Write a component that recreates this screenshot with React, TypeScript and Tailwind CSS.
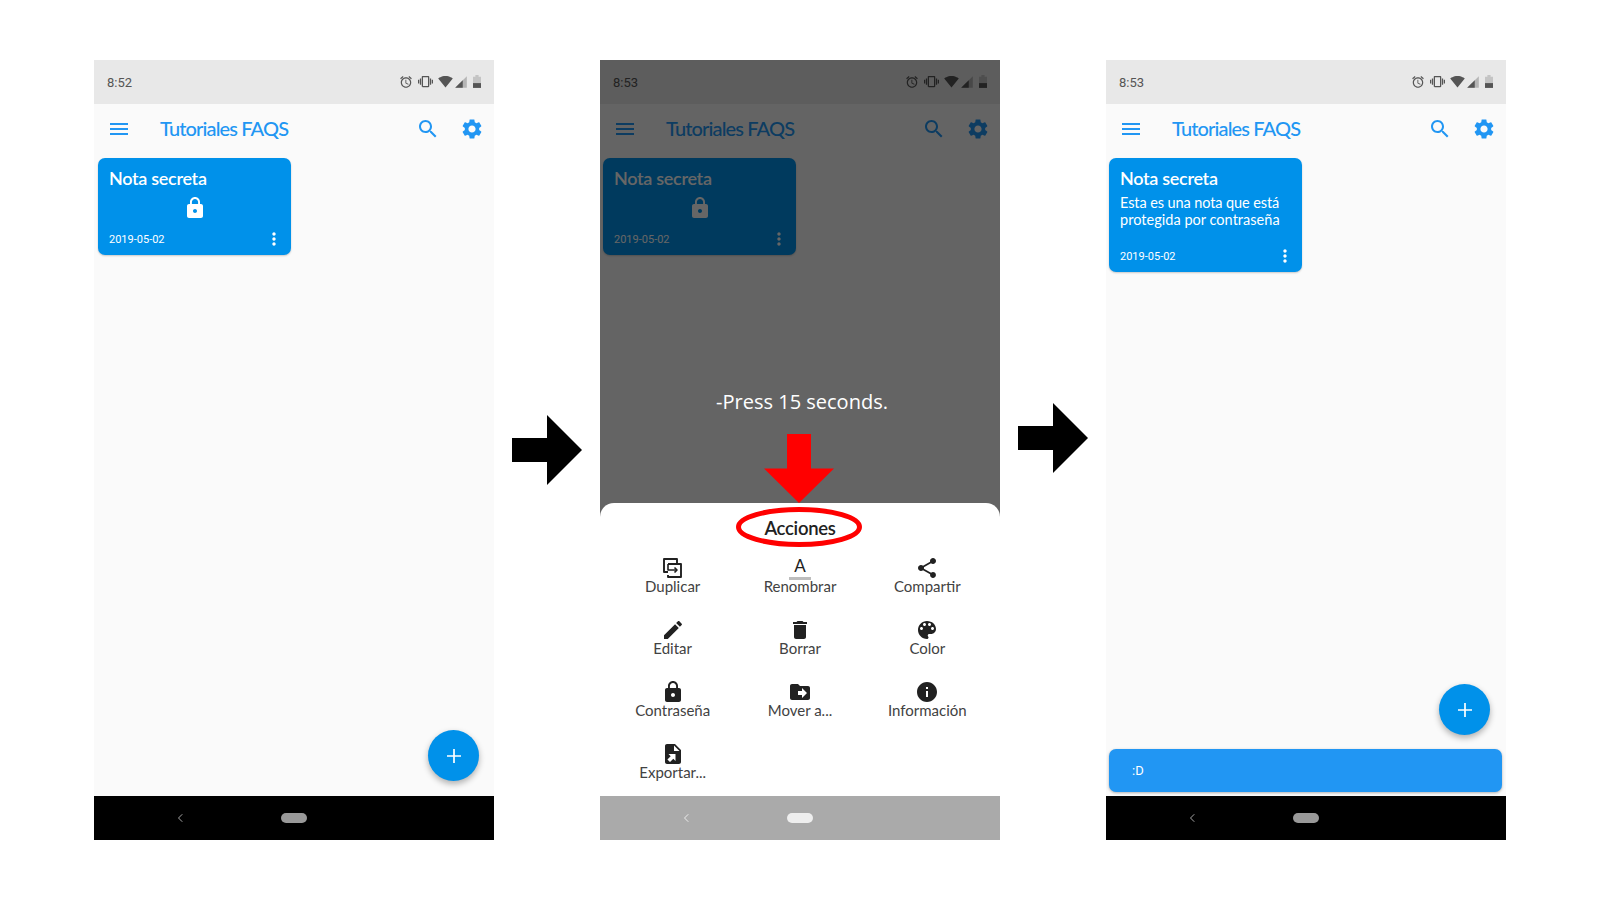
/**
 * Tutoriales FAQS - three phone screens showing how to open a secret note
 */

import type { ReactNode } from 'react';

const PATHS = {
  menu: 'M3 18h18v-2H3v2zm0-5h18v-2H3v2zm0-7v2h18V6H3z',
  search:
    'M15.5 14h-.79l-.28-.27C15.41 12.59 16 11.11 16 9.5 16 5.91 13.09 3 9.5 3S3 5.91 3 9.5 5.91 16 9.5 16c1.61 0 3.09-.59 4.23-1.57l.27.28v.79l5 4.99L20.49 19l-4.99-5zm-6 0C7.01 14 5 11.99 5 9.5S7.01 5 9.5 5 14 7.01 14 9.5 11.99 14 9.5 14z',
  settings:
    'M19.14 12.94c.04-.3.06-.61.06-.94 0-.32-.02-.64-.07-.94l2.03-1.58c.18-.14.23-.41.12-.61l-1.92-3.32c-.12-.22-.37-.29-.59-.22l-2.39.96c-.5-.38-1.03-.7-1.62-.94l-.36-2.54c-.04-.24-.24-.41-.48-.41h-3.84c-.24 0-.43.17-.47.41l-.36 2.54c-.59.24-1.13.57-1.62.94l-2.39-.96c-.22-.08-.47 0-.59.22L2.74 8.87c-.12.21-.08.47.12.61l2.03 1.58c-.05.3-.09.63-.09.94s.02.64.07.94l-2.03 1.58c-.18.14-.23.41-.12.61l1.92 3.32c.12.22.37.29.59.22l2.39-.96c.5.38 1.03.7 1.62.94l.36 2.54c.05.24.24.41.48.41h3.84c.24 0 .44-.17.47-.41l.36-2.54c.59-.24 1.13-.56 1.62-.94l2.39.96c.22.08.47 0 .59-.22l1.92-3.32c.12-.22.07-.47-.12-.61l-2.01-1.58zM12 15.6c-1.98 0-3.6-1.62-3.6-3.6s1.62-3.6 3.6-3.6 3.6 1.62 3.6 3.6-1.62 3.6-3.6 3.6z',
  lock: 'M18 8h-1V6c0-2.76-2.24-5-5-5S7 3.24 7 6v2H6c-1.1 0-2 .9-2 2v10c0 1.1.9 2 2 2h12c1.1 0 2-.9 2-2V10c0-1.1-.9-2-2-2zm-6 9c-1.1 0-2-.9-2-2s.9-2 2-2 2 .9 2 2-.9 2-2 2zm3.1-9H8.9V6c0-1.71 1.39-3.1 3.1-3.1 1.71 0 3.1 1.39 3.1 3.1v2z',
  more: 'M12 8c1.1 0 2-.9 2-2s-.9-2-2-2-2 .9-2 2 .9 2 2 2zm0 2c-1.1 0-2 .9-2 2s.9 2 2 2 2-.9 2-2-.9-2-2-2zm0 6c-1.1 0-2 .9-2 2s.9 2 2 2 2-.9 2-2-.9-2-2-2z',
  share:
    'M18 16.08c-.76 0-1.44.3-1.96.77L8.91 12.7c.05-.23.09-.46.09-.7s-.04-.47-.09-.7l7.05-4.11c.54.5 1.25.81 2.04.81 1.66 0 3-1.34 3-3s-1.34-3-3-3-3 1.34-3 3c0 .24.04.47.09.7L8.04 9.81C7.5 9.31 6.79 9 6 9c-1.66 0-3 1.34-3 3s1.34 3 3 3c.79 0 1.5-.31 2.04-.81l7.12 4.16c-.05.21-.08.43-.08.65 0 1.61 1.31 2.92 2.92 2.92 1.61 0 2.92-1.31 2.92-2.92s-1.31-2.92-2.92-2.92z',
  edit: 'M3 17.25V21h3.75L17.81 9.94l-3.75-3.75L3 17.25zM20.71 7.04c.39-.39.39-1.02 0-1.41l-2.34-2.34c-.39-.39-1.02-.39-1.41 0l-1.83 1.83 3.75 3.75 1.83-1.83z',
  trash: 'M6 19c0 1.1.9 2 2 2h8c1.1 0 2-.9 2-2V7H6v12zM19 4h-3.5l-1-1h-5l-1 1H5v2h14V4z',
  palette:
    'M12 3c-4.97 0-9 4.03-9 9s4.03 9 9 9c.83 0 1.5-.67 1.5-1.5 0-.39-.15-.74-.39-1.01-.23-.26-.38-.61-.38-.99 0-.83.67-1.5 1.5-1.5H16c2.76 0 5-2.24 5-5 0-4.42-4.03-8-9-8zm-5.5 9c-.83 0-1.5-.67-1.5-1.5S5.67 9 6.5 9 8 9.67 8 10.5 7.33 12 6.5 12zm3-4C8.67 8 8 7.33 8 6.5S8.67 5 9.5 5s1.5.67 1.5 1.5S10.33 8 9.5 8zm5 0c-.83 0-1.5-.67-1.5-1.5S13.67 5 14.5 5s1.5.67 1.5 1.5S15.33 8 14.5 8zm3 4c-.83 0-1.5-.67-1.5-1.5S16.67 9 17.5 9s1.5.67 1.5 1.5-.67 1.5-1.5 1.5z',
  info: 'M12 2C6.48 2 2 6.48 2 12s4.48 10 10 10 10-4.48 10-10S17.52 2 12 2zm1 15h-2v-6h2v6zm0-8h-2V7h2v2z',
  folderMove:
    'M20 6h-8l-2-2H4c-1.1 0-2 .9-2 2v12c0 1.1.9 2 2 2h16c1.1 0 2-.9 2-2V8c0-1.1-.9-2-2-2zm-6 12v-3h-4v-4h4V8l5 5-5 5z',
  fileExport:
    'M14 2H6c-1.1 0-2 .9-2 2v16c0 1.1.9 2 2 2h12c1.1 0 2-.9 2-2V8l-6-6zm-1 1.5L18.5 9H13V3.5zM14.5 12v7l-2.2-2.2L9 20.1 6.4 17.5l3.3-3.3L7.5 12z',
  alarm:
    'M22 5.72l-4.6-3.86-1.29 1.53 4.6 3.86L22 5.72zM7.88 3.39L6.6 1.86 2 5.71l1.29 1.53 4.59-3.85zM12.5 8H11v6l4.75 2.85.75-1.23-4-2.37V8zM12 4c-4.97 0-9 4.03-9 9s4.03 9 9 9 9-4.03 9-9-4.03-9-9-9zm0 16c-3.87 0-7-3.13-7-7s3.13-7 7-7 7 3.13 7 7-3.13 7-7 7z',
  vibration:
    'M0 15h2V9H0v6zm3 2h2V7H3v10zm19-8v6h2V9h-2zm-3 8h2V7h-2v10zM16.5 3h-9C6.67 3 6 3.67 6 4.5v15c0 .83.67 1.5 1.5 1.5h9c.83 0 1.5-.67 1.5-1.5v-15c0-.83-.67-1.5-1.5-1.5zM16 19H8V5h8v14z',
  wifi: 'M12.01 21.49L23.64 7c-.45-.34-4.93-4-11.64-4C5.28 3 .81 6.66.36 7l11.63 14.49.01.01.01-.01z',
};

function Icon({ d, className }: { d: string; className: string }) {
  return (
    <svg viewBox="0 0 24 24" fill="currentColor" className={className}>
      <path d={d} />
    </svg>
  );
}

function StatusBar({ time }: { time: string }) {
  return (
    <div className="h-[44px] shrink-0 bg-[#e8e8e8] flex items-center pl-[13px] pr-[13px] text-[#555555]">
      <span className="font-['Roboto'] text-[13px] mt-[2px]">{time}</span>
      <div className="ml-auto flex items-center gap-[5px] text-[#555555] -mt-[1px]">
        <Icon d={PATHS.alarm} className="w-[14px] h-[14px]" />
        <Icon d={PATHS.vibration} className="w-[15px] h-[15px]" />
        <Icon d={PATHS.wifi} className="w-[15px] h-[15px]" />
        <svg viewBox="0 0 24 24" className="w-[14px] h-[14px] -ml-[4px]">
          <path d="M22 22V2L2 22z" fill="#b5b5b5" />
          <path d="M15 22V9L2 22z" fill="#555555" />
        </svg>
        <svg viewBox="0 0 10 16" className="w-[8px] h-[13px]">
          <path d="M3 0h4v2h3v14H0V2h3z" fill="#c4c4c4" />
          <path d="M0 10h10v6H0z" fill="#555555" />
        </svg>
      </div>
    </div>
  );
}

function AppBar() {
  return (
    <div className="h-[50px] shrink-0 flex items-center pl-[13px] pr-[10px] text-[#2196f3]">
      <Icon d={PATHS.menu} className="w-[24px] h-[24px]" />
      <span className="ml-[29px] -mt-[2px] font-['Lato'] text-[20px] font-medium tracking-[-0.87px]">Tutoriales FAQS</span>
      <Icon d={PATHS.search} className="ml-auto w-[24px] h-[24px]" />
      <Icon d={PATHS.settings} className="ml-[20px] w-[24px] h-[24px]" />
    </div>
  );
}

function NoteCard({ children, offset }: { children: ReactNode; offset: string }) {
  return (
    <div className={`${offset} mt-[4px] w-[193px] rounded-[7px] bg-[#0091ea] text-white pt-[8px] pb-[6px] pl-[11px] pr-[7px] shadow-[0_1px_2px_rgba(0,0,0,0.2)]`}>
      <div className="font-['Lato'] text-[18px] leading-[24px] font-semibold tracking-[-0.3px]">Nota secreta</div>
      {children}
      <div className="flex items-center justify-between h-[20px]">
        <span className="font-['Roboto'] text-[11px] mt-[3px]">2019-05-02</span>
        <Icon d={PATHS.more} className="w-[20px] h-[20px]" />
      </div>
    </div>
  );
}

function LockedNote({ offset }: { offset: string }) {
  return (
    <NoteCard offset={offset}>
      <div className="flex justify-center mt-[6px] mb-[9px] pr-[4px]">
        <Icon d={PATHS.lock} className="w-[24px] h-[24px]" />
      </div>
    </NoteCard>
  );
}

function OpenNote({ offset }: { offset: string }) {
  return (
    <NoteCard offset={offset}>
      <p className="font-['Lato'] text-[14.5px] leading-[17px] mt-[4px] mb-[18px]">
        <span className="tracking-[-0.1px]">Esta es una nota que está</span>
        <br />
        <span className="tracking-[0.03px]">protegida por contraseña</span>
      </p>
    </NoteCard>
  );
}

function NavBar({ dimmed }: { dimmed?: boolean }) {
  return (
    <div className={`h-[44px] shrink-0 flex items-center ${dimmed ? 'bg-[#aaaaaa]' : 'bg-black'}`}>
      <svg viewBox="0 0 8 12" className="ml-[83px] w-[6px] h-[10px]" fill="none" stroke={dimmed ? '#eeeeee' : '#aaaaaa'} strokeWidth="1.3">
        <path d="M7 1 2 6l5 5" />
      </svg>
      <div className={`ml-[98px] w-[26px] h-[10px] rounded-full ${dimmed ? 'bg-[#eeeeee]' : 'bg-[#999999]'}`} />
    </div>
  );
}

function Fab({ className }: { className: string }) {
  return (
    <div className={`absolute w-[51px] h-[51px] rounded-full bg-[#0091ea] flex items-center justify-center shadow-[0_3px_6px_rgba(0,0,0,0.3)] ${className}`}>
      <svg viewBox="0 0 14 14" className="w-[14px] h-[14px]" stroke="white" strokeWidth="1.7">
        <path d="M7 0v14M0 7h14" />
      </svg>
    </div>
  );
}

function DuplicateIcon() {
  return (
    <svg viewBox="0 0 19 20" fill="none" stroke="#212121" strokeWidth="1.9" strokeLinejoin="round" className="w-[19px] h-[20px]">
      <path d="M14 6V1H1v13h4" />
      <path d="M5 6h13v13H5v-2" />
      <path d="M5 6v6h9" strokeWidth="1.6" />
      <path d="M11.5 9.5 14 12l-2.5 2.5" strokeWidth="1.6" />
    </svg>
  );
}

function RenameIcon() {
  return (
    <div className="w-[24px] h-[24px] flex flex-col items-center">
      <span className="font-['Lato'] text-[17px] leading-[19px] text-[#212121]">A</span>
      <div className="mt-[2px] w-[22px] h-[3px] bg-[#bdbdbd]" />
    </div>
  );
}

const ACTIONS: { label: string; icon: ReactNode }[] = [
  { label: 'Duplicar', icon: <DuplicateIcon /> },
  { label: 'Renombrar', icon: <RenameIcon /> },
  { label: 'Compartir', icon: <Icon d={PATHS.share} className="w-[24px] h-[24px]" /> },
  { label: 'Editar', icon: <Icon d={PATHS.edit} className="w-[24px] h-[24px]" /> },
  { label: 'Borrar', icon: <Icon d={PATHS.trash} className="w-[24px] h-[24px]" /> },
  { label: 'Color', icon: <Icon d={PATHS.palette} className="w-[24px] h-[24px]" /> },
  { label: 'Contraseña', icon: <Icon d={PATHS.lock} className="w-[24px] h-[24px]" /> },
  { label: 'Mover a...', icon: <Icon d={PATHS.folderMove} className="w-[24px] h-[24px]" /> },
  { label: 'Información', icon: <Icon d={PATHS.info} className="w-[24px] h-[24px]" /> },
  { label: 'Exportar...', icon: <Icon d={PATHS.fileExport} className="w-[24px] h-[24px]" /> },
];

function ActionSheet() {
  return (
    <div className="relative h-[293px] bg-white rounded-t-[14px] pt-[13px]">
      <div className="text-center font-['Lato'] text-[18.5px] leading-[24px] font-semibold tracking-[-0.3px] text-[#212121]">Acciones</div>
      <div className="grid grid-cols-3 px-[9px] mt-[16px] auto-rows-[62px]">
        {ACTIONS.map(action => (
          <div key={action.label} className="flex flex-col items-center text-[#212121]">
            <div className="h-[24px] flex items-center justify-center">{action.icon}</div>
            <span className="font-['Lato'] text-[15px] leading-[20px] -mt-[4px] text-[#424242]">{action.label}</span>
          </div>
        ))}
      </div>

      {/* Red annotations on top of the sheet */}
      <svg viewBox="0 0 70 70" className="absolute left-[164px] -top-[69px] w-[70px] h-[69px]" preserveAspectRatio="none">
        <path d="M23 0h24v35h23L35 70 0 35h23z" fill="#ff0000" />
      </svg>
      <svg viewBox="0 0 126 40" className="absolute left-[136px] top-[4px] w-[126px] h-[40px]" fill="none">
        <ellipse cx="63" cy="20" rx="60.5" ry="17.5" stroke="#ff0000" strokeWidth="5" />
      </svg>
    </div>
  );
}

function Arrow({ className }: { className: string }) {
  return (
    <svg viewBox="0 0 70 70" className={`w-[70px] h-[70px] mx-[18px] shrink-0 ${className}`}>
      <path d="M0 23h35V0l35 35-35 35V47H0z" fill="#000000" />
    </svg>
  );
}

export default function App() {
  return (
    <div className="w-[1600px] h-[900px] bg-white flex justify-center items-start pt-[60px]">
      {/* Locked note */}
      <div className="relative w-[400px] h-[780px] flex flex-col bg-[#fafafa]">
        <StatusBar time="8:52" />
        <AppBar />
        <div className="flex-1">
          <LockedNote offset="ml-[4px]" />
        </div>
        <Fab className="right-[15px] bottom-[59px]" />
        <NavBar />
      </div>

      <Arrow className="mt-[355px]" />

      {/* Long press, action sheet */}
      <div className="relative w-[400px] h-[780px] flex flex-col bg-[#fafafa]">
        <StatusBar time="8:53" />
        <AppBar />
        <div className="flex-1">
          <LockedNote offset="ml-[3px]" />
        </div>
        <div className="absolute inset-x-0 top-0 bottom-[44px] bg-black/60 flex flex-col justify-end">
          <div className="flex-1 flex items-end justify-center pl-[4px] pb-[87px]">
            <span className="font-['Open_Sans'] text-[20px] leading-[28px] text-white">-Press 15 seconds.</span>
          </div>
          <ActionSheet />
        </div>
        <NavBar dimmed />
      </div>

      <Arrow className="mt-[343px]" />

      {/* Opened note with snackbar */}
      <div className="relative w-[400px] h-[780px] flex flex-col bg-[#fafafa]">
        <StatusBar time="8:53" />
        <AppBar />
        <div className="flex-1">
          <OpenNote offset="ml-[3px]" />
        </div>
        <Fab className="right-[16px] bottom-[105px]" />
        <div className="absolute left-[3px] right-[4px] bottom-[48px] h-[43px] rounded-[7px] bg-[#2196f3] flex items-center pl-[23px] shadow-[0_1px_3px_rgba(0,0,0,0.3)]">
          <span className="font-['Roboto'] text-[13px] text-white mt-[1px]">:D</span>
        </div>
        <NavBar />
      </div>
    </div>
  );
}
